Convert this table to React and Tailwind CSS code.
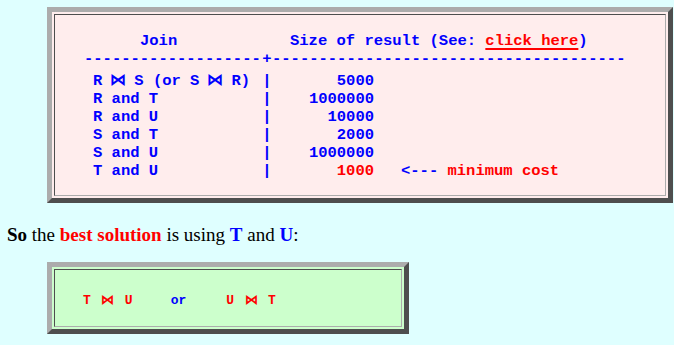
const Bowtie = ({ w }) => (
  <span className={`inline-block text-center align-top ${w}`}>⋈</span>
);

const rows = [
  { join: null, size: "5000" },
  { join: "R and T", size: "1000000" },
  { join: "R and U", size: "10000" },
  { join: "S and T", size: "2000" },
  { join: "S and U", size: "1000000" },
  { join: "T and U", size: "1000", best: true },
];

export default function App() {
  return (
    <div className="min-h-screen bg-[#dfffff] pt-[7px] font-['Liberation_Serif',serif] text-black">
      {/* Join cost table */}
      <div className="ml-[47px] w-[626px] border-[5px] border-t-[#acacac] border-l-[#acacac] border-b-[#4e4e4e] border-r-[#4e4e4e] bg-[#ffeded] p-[2px]">
        <div className="border border-t-[#4e4e4e] border-l-[#4e4e4e] border-b-[#acacac] border-r-[#acacac] pt-[18px] pb-[15px] font-['Liberation_Mono',monospace] text-[15.5px] font-bold leading-[18px] text-[#0000ff] whitespace-pre">
          <div className="flex h-[17px] pl-[38px] leading-[17px]">
            <span className="w-[197px] shrink-0 pl-[47px]">Join</span>
            <span>
              Size of result (See:{" "}
              <span className="text-[#ff0000] underline decoration-2 underline-offset-[3px]">
                click here
              </span>
              )
            </span>
          </div>
          <div className="flex h-[18px] pl-[29px]">
            <span className="w-[178px] shrink-0">{"-".repeat(19)}</span>
            <span className="w-[10px] shrink-0 text-center">+</span>
            <span className="w-[355px] shrink-0">{"-".repeat(38)}</span>
          </div>
          <div className="mt-1">
            {rows.map((r, i) => (
              <div key={i} className="flex h-[18px] pl-[38px]">
                <span className="w-[169px] shrink-0">
                  {r.join ?? (
                    <>
                      R<Bowtie w="h-[18px] w-[32px] leading-[18px]" />S (or S
                      <Bowtie w="h-[18px] w-[32px] leading-[18px]" />R)
                    </>
                  )}
                </span>
                <span className="w-[10px] shrink-0 text-center">|</span>
                <span className={`w-[102px] shrink-0 text-right ${r.best ? "text-[#ff0000]" : ""}`}>
                  {r.size}
                </span>
                {r.best && (
                  <span className="pl-[27px]">
                    {"<--- "}
                    <span className="text-[#ff0000]">minimum cost</span>
                  </span>
                )}
              </div>
            ))}
          </div>
        </div>
      </div>

      <p className="mt-[21px] h-[22px] pl-[7px] text-[19px] leading-[22px]">
        <b>So</b> the <b className="text-[#ff0000]">best solution</b> is using{" "}
        <b className="text-[#0000ff]">T</b> and <b className="text-[#0000ff]">U</b>:
      </p>

      {/* Result box */}
      <div className="mt-4 ml-[47px] w-[362px] border-[5px] border-t-[#acacac] border-l-[#acacac] border-b-[#4e4e4e] border-r-[#4e4e4e] bg-[#ccffcc] p-[2px]">
        <div className="flex h-[58px] items-center border border-t-[#4e4e4e] border-l-[#4e4e4e] border-b-[#acacac] border-r-[#acacac] pl-[28px] pt-[6px] font-['Liberation_Mono',monospace] text-[13px] font-bold leading-[16px] text-[#ff0000] whitespace-pre">
          <span>
            T<Bowtie w="h-[16px] w-[34px] leading-[16px]" />U
          </span>
          <span className="ml-[38px] text-[#0000ff]">or</span>
          <span className="ml-[40px]">
            U<Bowtie w="h-[16px] w-[34px] leading-[16px]" />T
          </span>
        </div>
      </div>
    </div>
  );
}
